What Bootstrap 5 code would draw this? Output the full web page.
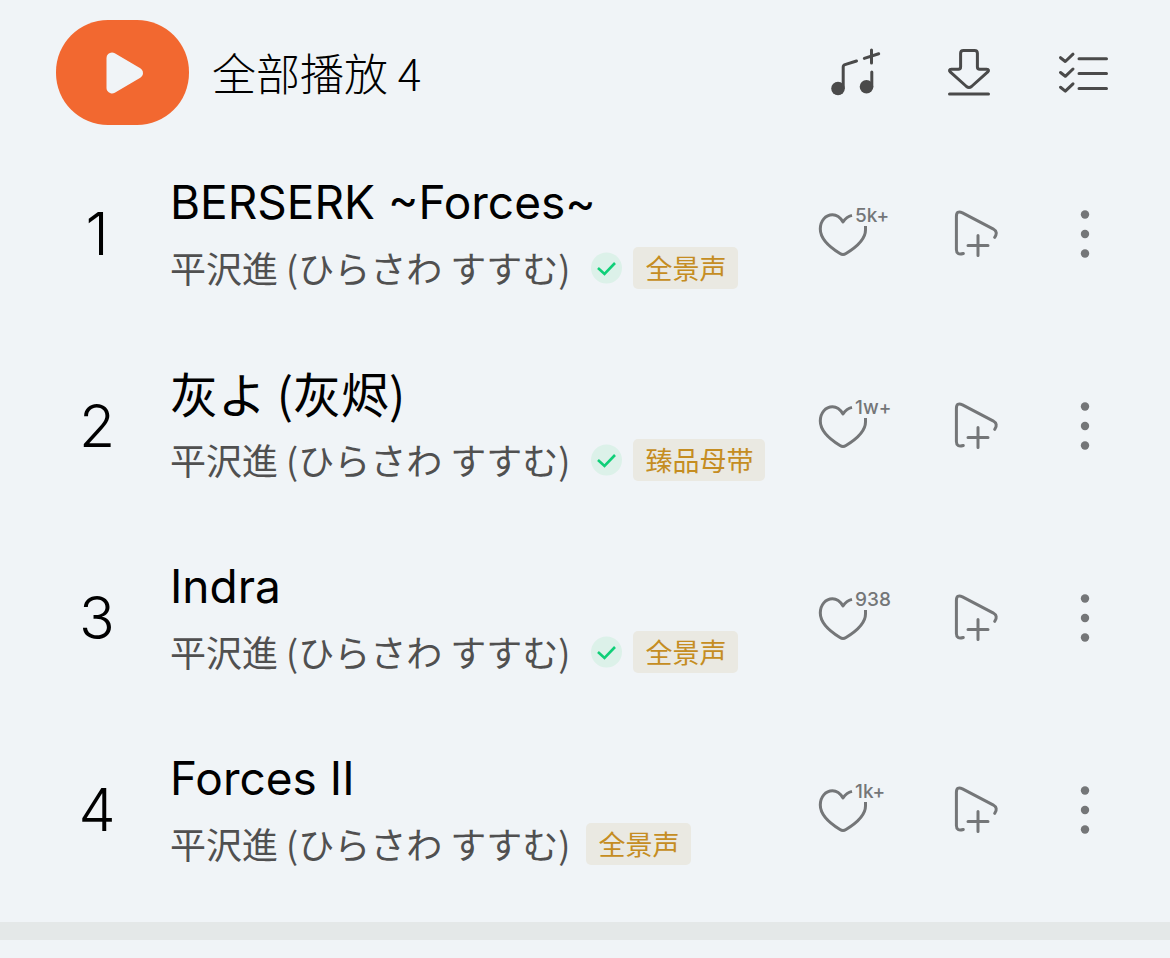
<!DOCTYPE html>
<html lang="zh-CN">
<head>
<meta charset="utf-8">
<meta name="viewport" content="width=device-width, initial-scale=1">
<title>全部播放</title>
<link href="https://cdn.jsdelivr.net/npm/bootstrap@5.3.0/dist/css/bootstrap.min.css" rel="stylesheet">
<style>
body { background: #f0f4f7; color: #000; font-family: Inter, "Noto Sans CJK SC", sans-serif; }
.page-head { padding: 20px 30px 13px 56px; }
.play-all { color: #000; gap: 23px; text-align: left; }
.play-pill { width: 133px; height: 105px; border-radius: 52px; background: #f26830; }
.play-label { font: 300 44px/62px "Noto Sans CJK SC", sans-serif; padding-bottom: 2px; }
.tool { width: 114px; height: 80px; color: #4a4a4a; flex: none; }
.tool svg { display: block; fill: none; stroke: currentColor; stroke-width: 3; stroke-linecap: round; stroke-linejoin: round; }
.tool .solid { fill: currentColor; stroke: none; }
.track { min-height: 192px; padding: 0 30px 0 56px; }
.track .tool { color: #747678; }
.track-no { width: 82px; flex: none; font-size: 59px; line-height: 72px; font-weight: 350; }
.track-info { padding: 0 0 8px 32px; min-width: 0; }
.track-name { font-size: 46px; line-height: 62px; margin-bottom: 14px; font-weight: 400; }
.name-cjk { font-family: "Noto Sans CJK SC", sans-serif; font-size: 48px; line-height: 58px; margin-bottom: 18px; }
.track-meta { gap: 11px; height: 42px; }
.artist { font: 400 36px/40px "Noto Sans CJK JP", sans-serif; color: #505050; white-space: nowrap; padding: 0 5px 2px 0; }
.quality { font: 400 27px/42px "Noto Sans CJK SC", sans-serif; color: #c58d22; background: #eae9e2; padding: 0 12px; border-radius: 5px; white-space: nowrap; }
.like-count { left: 57px; top: 12px; font-size: 19px; line-height: 20px; font-weight: 500; }
.band { height: 18px; margin: 16px 0 18px; background: #e4e8e8; }
</style>
</head>
<body>
<svg class="d-none" aria-hidden="true">
  <symbol id="i-heart" viewBox="0 0 114 80"><path d="M54 21.400C50 22.400 47 25 45 28C42 23 38.500 20.800 34.500 20.800C27.500 20.800 22.300 27 22.300 35C22.300 46 33 54 42 59.500Q45 61.500 48 59.500C57 54 67.500 45 67.500 36V32" stroke-linecap="butt"/></symbol>
  <symbol id="i-next" viewBox="0 0 114 80"><path d="M51.300 59.500Q44.400 61.500 44.400 55.500V22.500Q44.400 16 50.500 18.800L81 34.800Q86.500 38 82.700 43.300M56 51.400H76M66 41.400V61.400"/></symbol>
  <symbol id="i-dots" viewBox="0 0 114 80"><g fill="currentColor" stroke="none"><circle cx="59" cy="20.500" r="4.200"/><circle cx="59" cy="40" r="4.200"/><circle cx="59" cy="59.500" r="4.200"/></g></symbol>
  <symbol id="i-check" viewBox="0 0 36 32"><circle cx="20.500" cy="16" r="15.500" fill="#dcf1e9"/><path d="M12 16L18.500 22L29 11" fill="none" stroke="#0fcf78" stroke-width="2.600"/></symbol>
</svg>

<header class="page-head d-flex align-items-center">
  <button type="button" class="play-all btn border-0 p-0 d-flex align-items-center">
    <span class="play-pill d-flex align-items-center justify-content-center">
      <svg width="133" height="105" viewBox="0 0 133 105" aria-hidden="true"><path d="M56 38L81.500 53L56 68Z" fill="#f0f4f7" stroke="#f0f4f7" stroke-width="11" stroke-linejoin="round"/></svg>
    </span>
    <span class="play-label">全部播放 4</span>
  </button>
  <div class="d-flex ms-auto">
    <button type="button" class="tool btn border-0 p-0" aria-label="添加到歌单">
      <svg width="114" height="80" viewBox="0 0 114 80"><g class="solid"><circle cx="40" cy="55.500" r="6.800"/><circle cx="68.500" cy="53.800" r="6.800"/></g><path d="M45.200 55V34Q45.200 32.300 47 31.700L58.500 28M66.300 25.400L80.700 20.700M73.500 17V30M73.800 39V54"/></svg>
    </button>
    <button type="button" class="tool btn border-0 p-0" aria-label="下载">
      <svg width="114" height="80" viewBox="0 0 114 80"><path d="M51.500 17.400H62.500Q65.400 17.400 65.400 20.300V34Q65.400 36.300 67.700 36.300H74.500Q78 36.500 75.500 39.200L59.500 53.500Q57 55.500 54.500 53.500L38.500 39.200Q36 36.500 39.500 36.300H46.300Q48.600 36.300 48.600 34V20.300Q48.600 17.400 51.500 17.400ZM37.500 61H76.500"/></svg>
    </button>
    <button type="button" class="tool btn border-0 p-0" aria-label="多选">
      <svg width="114" height="80" viewBox="0 0 114 80"><path d="M34.500 24.700L39.300 28.500L47 21.200M34.500 39.500L39.300 43.300L47 36M34.500 54.300L39.300 58.100L47 50.800M53 25.700H80.500M53 40.500H80.500M53 55.400H80.500"/></svg>
    </button>
  </div>
</header>

<main>
  <ol class="list-unstyled mb-0">
    <li class="track d-flex align-items-center">
      <div class="track-no text-center">1</div>
      <div class="track-info flex-grow-1">
        <h2 class="track-name">BERSERK ~Forces~</h2>
        <div class="track-meta d-flex align-items-center"><span class="artist" lang="ja">平沢進 (ひらさわ すすむ)</span><svg width="36" height="32"><use href="#i-check"/></svg><span class="quality">全景声</span></div>
      </div>
      <button type="button" class="tool btn border-0 p-0 position-relative" aria-label="喜欢 5k+"><svg width="114" height="80"><use href="#i-heart"/></svg><span class="like-count position-absolute">5k+</span></button>
      <button type="button" class="tool btn border-0 p-0" aria-label="下一首播放"><svg width="114" height="80"><use href="#i-next"/></svg></button>
      <button type="button" class="tool btn border-0 p-0" aria-label="更多"><svg width="114" height="80"><use href="#i-dots"/></svg></button>
    </li>
    <li class="track d-flex align-items-center">
      <div class="track-no text-center">2</div>
      <div class="track-info flex-grow-1">
        <h2 class="track-name name-cjk">灰よ (灰烬)</h2>
        <div class="track-meta d-flex align-items-center"><span class="artist" lang="ja">平沢進 (ひらさわ すすむ)</span><svg width="36" height="32"><use href="#i-check"/></svg><span class="quality">臻品母带</span></div>
      </div>
      <button type="button" class="tool btn border-0 p-0 position-relative" aria-label="喜欢 1w+"><svg width="114" height="80"><use href="#i-heart"/></svg><span class="like-count position-absolute">1w+</span></button>
      <button type="button" class="tool btn border-0 p-0" aria-label="下一首播放"><svg width="114" height="80"><use href="#i-next"/></svg></button>
      <button type="button" class="tool btn border-0 p-0" aria-label="更多"><svg width="114" height="80"><use href="#i-dots"/></svg></button>
    </li>
    <li class="track d-flex align-items-center">
      <div class="track-no text-center">3</div>
      <div class="track-info flex-grow-1">
        <h2 class="track-name">Indra</h2>
        <div class="track-meta d-flex align-items-center"><span class="artist" lang="ja">平沢進 (ひらさわ すすむ)</span><svg width="36" height="32"><use href="#i-check"/></svg><span class="quality">全景声</span></div>
      </div>
      <button type="button" class="tool btn border-0 p-0 position-relative" aria-label="喜欢 938"><svg width="114" height="80"><use href="#i-heart"/></svg><span class="like-count position-absolute">938</span></button>
      <button type="button" class="tool btn border-0 p-0" aria-label="下一首播放"><svg width="114" height="80"><use href="#i-next"/></svg></button>
      <button type="button" class="tool btn border-0 p-0" aria-label="更多"><svg width="114" height="80"><use href="#i-dots"/></svg></button>
    </li>
    <li class="track d-flex align-items-center">
      <div class="track-no text-center">4</div>
      <div class="track-info flex-grow-1">
        <h2 class="track-name">Forces II</h2>
        <div class="track-meta d-flex align-items-center"><span class="artist" lang="ja">平沢進 (ひらさわ すすむ)</span><span class="quality">全景声</span></div>
      </div>
      <button type="button" class="tool btn border-0 p-0 position-relative" aria-label="喜欢 1k+"><svg width="114" height="80"><use href="#i-heart"/></svg><span class="like-count position-absolute">1k+</span></button>
      <button type="button" class="tool btn border-0 p-0" aria-label="下一首播放"><svg width="114" height="80"><use href="#i-next"/></svg></button>
      <button type="button" class="tool btn border-0 p-0" aria-label="更多"><svg width="114" height="80"><use href="#i-dots"/></svg></button>
    </li>
  </ol>
</main>
<div class="band"></div>
<script src="https://cdn.jsdelivr.net/npm/bootstrap@5.3.0/dist/js/bootstrap.bundle.min.js"></script>
</body>
</html>
